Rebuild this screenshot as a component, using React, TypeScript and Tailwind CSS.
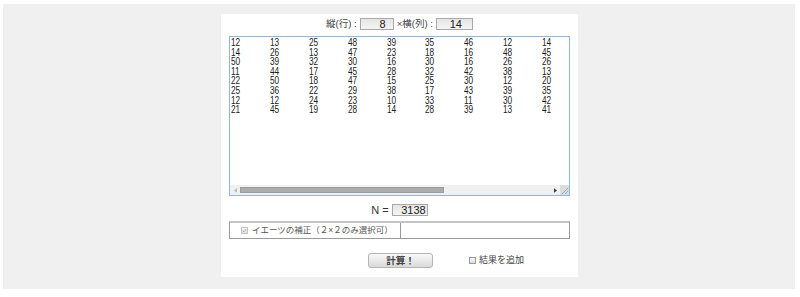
import React from "react";

const ROWS: number[][] = [
  [12, 13, 25, 48, 39, 35, 46, 12, 14],
  [14, 26, 13, 47, 23, 18, 16, 48, 45],
  [50, 39, 32, 30, 16, 30, 16, 26, 26],
  [11, 44, 17, 45, 28, 32, 42, 38, 13],
  [22, 50, 18, 47, 15, 25, 30, 12, 20],
  [25, 36, 22, 29, 38, 17, 43, 39, 35],
  [12, 12, 24, 23, 10, 33, 11, 30, 42],
  [21, 45, 19, 28, 14, 28, 39, 13, 41],
];

const jp = { fontFamily: '"Liberation Sans", "Noto Sans CJK JP", sans-serif' };

function NumBox({ value, width, pr }: { value: string; width: string; pr: string }) {
  return (
    <div
      className={`${width} ${pr} flex h-[12px] items-center justify-end border border-[#a8a8a8] bg-gradient-to-b from-[#e6e6e6] to-[#f4f4f4] text-[11px] leading-none text-[#222]`}
    >
      {value}
    </div>
  );
}

function Check({ checked, disabled }: { checked?: boolean; disabled?: boolean }) {
  return (
    <span
      className={`flex size-[7px] shrink-0 items-center justify-center border ${disabled ? "border-[#c4c4c4]" : "border-[#9a9a9a]"} bg-gradient-to-b from-[#f6f6f6] to-[#dedede]`}
    >
      {checked ? (
        <svg viewBox="0 0 8 8" className="size-[7px]">
          <path d="M1.2 4.2 L3.1 6 L6.8 1.6" fill="none" stroke="#9c9c9c" strokeWidth="1.3" />
        </svg>
      ) : null}
    </span>
  );
}

function Matrix() {
  return (
    <div className="mx-[8px] flex h-[160px] flex-col border border-[#8fb4e8] bg-white">
      <div className="flex-1 overflow-hidden pt-[1px] pl-[1px]">
        {ROWS.map((row, i) => (
          <div key={i} className="flex h-[9.6px]">
            {row.map((n, j) => (
              <span
                key={j}
                className="w-[38.9px] shrink-0 text-[11.5px] leading-[9.6px] text-[#1a1a1a]"
                style={{ fontFamily: '"Liberation Sans", sans-serif' }}
              >
                <span className="inline-block origin-left scale-x-[0.72]">{n}</span>
              </span>
            ))}
          </div>
        ))}
      </div>
      <div className="flex h-[10px] items-center bg-[#f0f0f0]">
        <span className="flex w-[10px] justify-center">
          <svg viewBox="0 0 4 6" className="h-[5px] w-[3px]">
            <path d="M4 0 L0 3 L4 6 Z" fill="#b8b8b8" />
          </svg>
        </span>
        <span className="h-[6px] w-[204px] border border-[#9c9c9c] bg-[#acacac]" />
        <span className="flex-1" />
        <span className="flex w-[10px] justify-center">
          <svg viewBox="0 0 4 6" className="h-[5px] w-[3px]">
            <path d="M0 0 L4 3 L0 6 Z" fill="#3a3a3a" />
          </svg>
        </span>
        <span className="h-[10px] w-[9px] bg-[#dcdcdc]">
          <svg viewBox="0 0 9 10" className="size-full">
            <path d="M8 3 L2 9 M8 6 L5 9" stroke="#9a9a9a" strokeWidth="0.8" />
          </svg>
        </span>
      </div>
    </div>
  );
}

export default function App() {
  return (
    <div className="h-[297px] w-[800px] bg-white px-[3px] pt-[4px]" style={jp}>
      <div className="h-[285px] w-[792px] bg-[#f0f0f0] pt-[10px]">
        <div className="ml-[218px] h-[263px] w-[357px] bg-white">
          <div className="flex h-[22px] items-start justify-center gap-[3px] pt-[4px] text-[9.5px] leading-[12px] text-[#444]">
            <span>縦(行) :</span>
            <NumBox value="8" width="w-[34px]" pr="pr-[7px]" />
            <span>×横(列) :</span>
            <NumBox value="14" width="w-[37px]" pr="pr-[10px]" />
          </div>

          <Matrix />

          <div className="mt-[8px] flex h-[12px] items-center justify-center gap-[3px] text-[11px] leading-[12px] text-[#333]">
            <span>N =</span>
            <NumBox value="3138" width="w-[36px]" pr="pr-[1px]" />
          </div>

          <div className="mx-[8px] mt-[5px] flex h-[18px] border border-t-2 border-[#9a9a9a] border-t-[#c4c4c4]">
            <div className="flex w-[171px] items-center gap-[4px] border-r border-[#9a9a9a] pl-[11px] text-[8.5px] leading-none whitespace-nowrap text-[#555]">
              <Check checked disabled />
              <span>イエーツの補正（２×２のみ選択可）</span>
            </div>
            <div className="flex-1" />
          </div>

          <div className="mt-[14px] flex items-center pl-[147px]">
            <button
              type="button"
              className="h-[15px] w-[65px] rounded-[3px] border border-[#b4b4b4] bg-gradient-to-b from-[#f9f9f9] to-[#d9d9d9] text-[9.5px] leading-none font-bold text-[#444]"
            >
              計算！
            </button>
            <label className="ml-[36px] flex items-center gap-[3px] text-[9px] leading-none whitespace-nowrap text-[#444]">
              <Check />
              <span>結果を追加</span>
            </label>
          </div>
        </div>
      </div>
    </div>
  );
}
